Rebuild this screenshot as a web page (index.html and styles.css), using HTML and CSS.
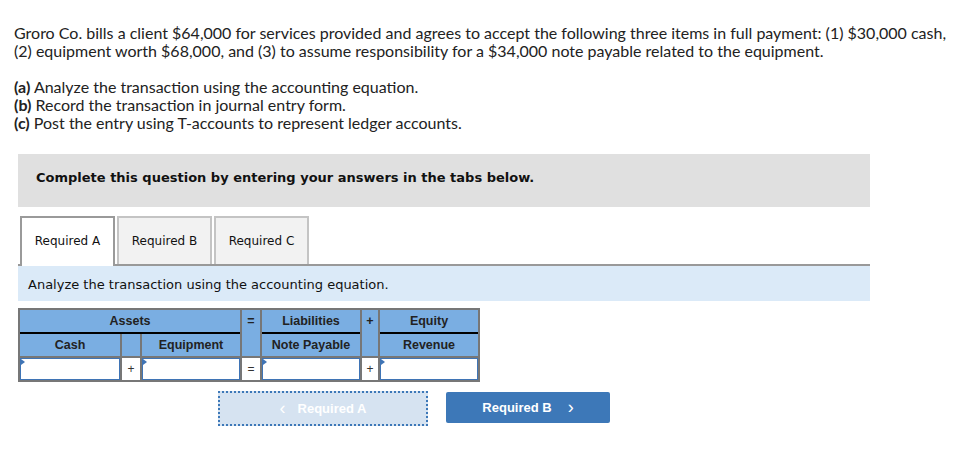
FILE: index.html
```html
<!DOCTYPE html>
<html>
<head>
<meta charset="utf-8">
<link rel="stylesheet" href="styles.css">
</head>
<body>
<div class="page">
  <p class="question">Groro Co. bills a client $64,000 for services provided and agrees to accept the following three items in full payment: (1) $30,000 cash, (2) equipment worth $68,000, and (3) to assume responsibility for a $34,000 note payable related to the equipment.</p>
  <p class="parts"><b>(a)</b> Analyze the transaction using the accounting equation.<br><b>(b)</b> Record the transaction in journal entry form.<br><b>(c)</b> Post the entry using T-accounts to represent ledger accounts.</p>

  <div class="panel">
    <div class="notice">Complete this question by entering your answers in the tabs below.</div>
    <div class="tabs">
      <div class="tab active">Required A</div>
      <div class="tab">Required B</div>
      <div class="tab">Required C</div>
    </div>
    <div class="strip">Analyze the transaction using the accounting equation.</div>

    <div class="eq">
      <div class="h group c1">Assets</div>
      <div class="h op c4">=</div>
      <div class="h group c5">Liabilities</div>
      <div class="h op c6">+</div>
      <div class="h group c7">Equity</div>
      <div class="h r2 c1s">Cash</div>
      <div class="h r2 c2s"></div>
      <div class="h r2 c3s">Equipment</div>
      <div class="h r2 c5s">Note Payable</div>
      <div class="h r2 c7s">Revenue</div>
      <div class="in"></div>
      <div class="sign">+</div>
      <div class="in"></div>
      <div class="sign">=</div>
      <div class="in"></div>
      <div class="sign">+</div>
      <div class="in"></div>
    </div>

    <div class="nav">
      <div class="btn prev"><span class="chev">&lsaquo;</span>Required A</div>
      <div class="btn next">Required B<span class="chev">&rsaquo;</span></div>
    </div>
  </div>
</div>
</body>
</html>
```

FILE: styles.css
```css
* { box-sizing: border-box; }
body {
  margin: 0;
  background: #fff;
  font-family: "Lato", "Liberation Sans", sans-serif;
  color: #222;
}
.page { padding: 24px 0 0 14px; }
.question {
  margin: 0;
  font-size: 16px;
  line-height: 18px;
  width: 940px;
}
.parts {
  margin: 18px 0 0;
  font-size: 16px;
  line-height: 18px;
}
.panel { margin: 22px 0 0 4px; width: 852px; }
.notice {
  background: #e0e0e0;
  height: 53px;
  padding: 16px 0 0 18px;
  font-family: "DejaVu Sans", Verdana, sans-serif;
  font-weight: bold;
  font-size: 13px;
  color: #111;
}
.tabs {
  display: flex;
  margin-top: 9px;
  padding-left: 2px;
  height: 48px;
  align-items: flex-end;
}
.tab {
  width: 95px;
  height: 48px;
  margin-right: 2px;
  border: 2px solid #c4c4c4;
  border-bottom: none;
  background: #f2f2f2;
  font-family: "DejaVu Sans", Verdana, sans-serif;
  font-size: 12px;
  color: #111;
  display: flex;
  align-items: center;
  justify-content: center;
}
.tab.active {
  background: #fff;
  border-color: #9a9a9a;
  height: 50px;
  margin-bottom: -2px;
  position: relative;
  z-index: 1;
  padding-bottom: 2px;
}
.strip {
  border-top: 2px solid #999;
  background: #dbeaf8;
  height: 37px;
  padding: 11px 0 0 10px;
  font-family: "DejaVu Sans", Verdana, sans-serif;
  font-size: 13px;
  color: #111;
}
.eq {
  margin-top: 7px;
  display: grid;
  grid-template-columns: 100px 18px 98px 18px 98px 16px 98px;
  grid-template-rows: 22px 22px 22px;
  gap: 2px;
  padding: 2px;
  width: 462px;
  background: #777;
  font-family: "Liberation Sans", Arial, sans-serif;
  font-size: 12.5px;
  font-weight: bold;
  color: #222;
}
.h {
  background: #7aaee2;
  display: flex;
  align-items: center;
  justify-content: center;
}
.group { box-shadow: 0 2px 0 #000; }
.c1 { grid-column: 1 / 4; grid-row: 1; }
.c4 { grid-column: 4; grid-row: 1 / 3; align-items: flex-start; padding-top: 4px; }
.c5 { grid-column: 5; grid-row: 1; }
.c6 { grid-column: 6; grid-row: 1 / 3; align-items: flex-start; padding-top: 4px; }
.c7 { grid-column: 7; grid-row: 1; }
.c1s { grid-column: 1; grid-row: 2; }
.c2s { grid-column: 2; grid-row: 2; }
.c3s { grid-column: 3; grid-row: 2; }
.c5s { grid-column: 5; grid-row: 2; }
.c7s { grid-column: 7; grid-row: 2; }
.in {
  background: #fff;
  border: 1px solid #3f74b5;
  position: relative;
}
.in::before {
  content: "";
  position: absolute;
  left: 0;
  top: 0;
  border-top: 3px solid transparent;
  border-bottom: 3px solid transparent;
  border-left: 4px solid #3f74b5;
}
.sign {
  background: #fff;
  display: flex;
  align-items: center;
  justify-content: center;
  font-weight: normal;
  font-size: 12px;
  color: #333;
}
.nav {
  display: flex;
  margin: 9px 0 0 200px;
  align-items: flex-start;
  gap: 18px;
}
.btn {
  display: flex;
  align-items: center;
  justify-content: center;
  font-family: "Liberation Sans", Arial, sans-serif;
  font-weight: bold;
  font-size: 13px;
  color: #fff;
}
.prev {
  width: 210px;
  height: 35px;
  background: #d6e3f1;
  border: 2px dotted #3d78b8;
}
.prev .chev { margin-right: 12px; font-size: 18px; font-weight: normal; }
.next {
  width: 164px;
  height: 31px;
  margin-top: 1px;
  background: #3d78b8;
  border-radius: 2px;
}
.next .chev { margin-left: 16px; font-size: 18px; font-weight: normal; }
```
